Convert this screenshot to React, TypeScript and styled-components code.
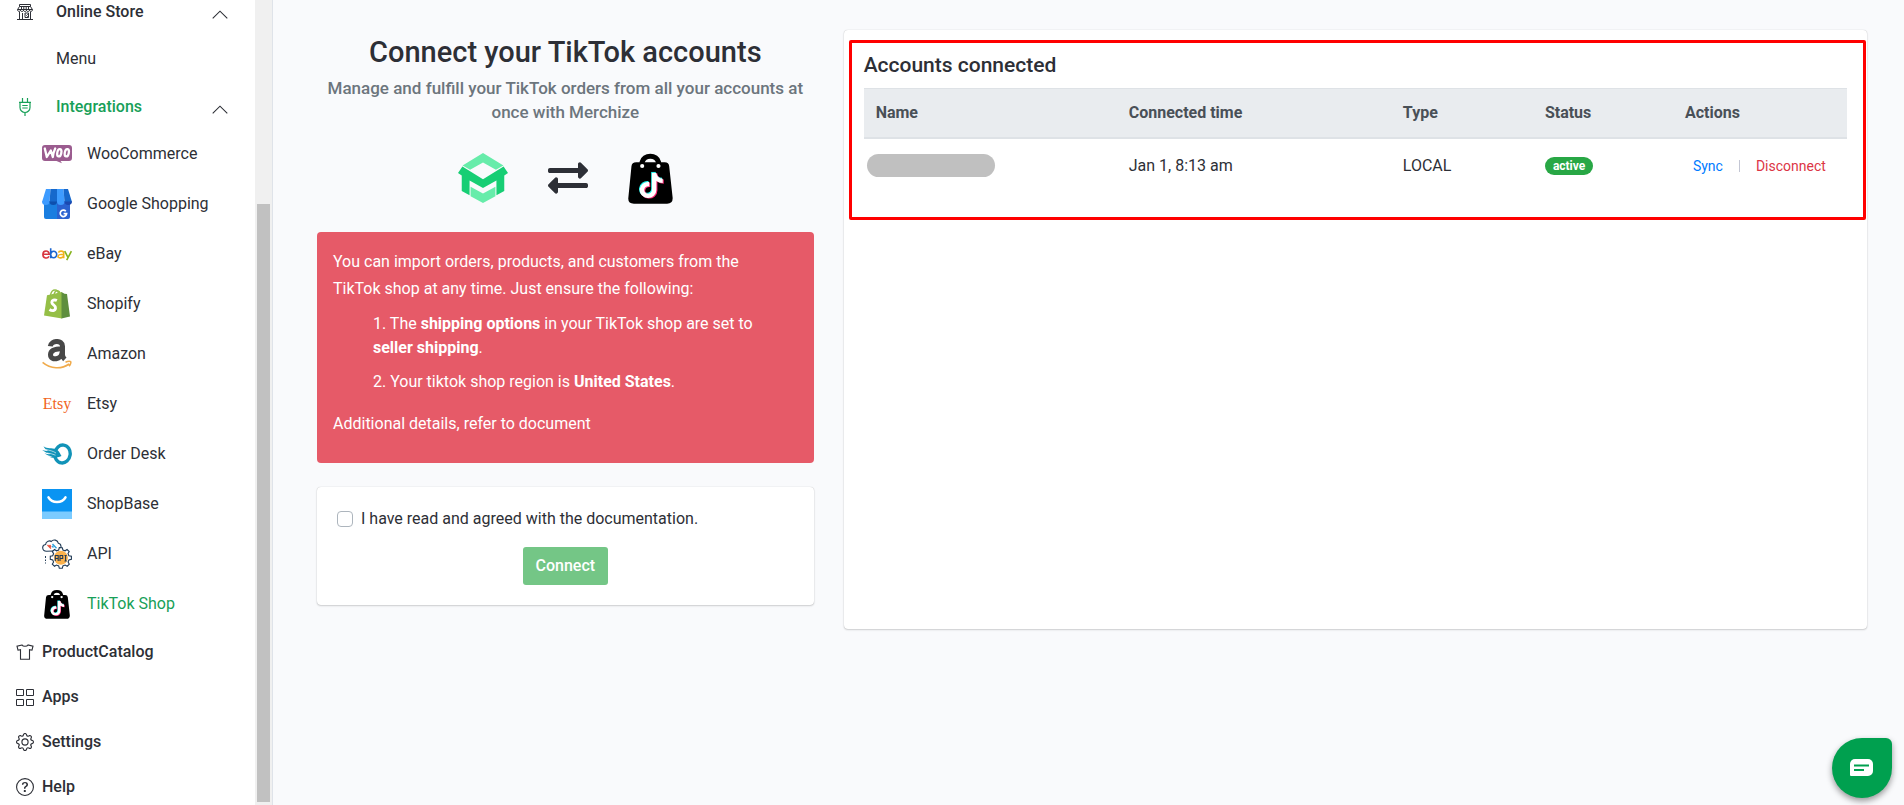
import React from 'react';
import styled, { createGlobalStyle } from 'styled-components';
import { FaExchangeAlt, FaTiktok } from 'react-icons/fa';
import { BsGear, BsQuestionCircle } from 'react-icons/bs';

const GlobalStyle = createGlobalStyle`
  *, *::before, *::after { box-sizing: border-box; }
  body {
    margin: 0;
    background: #f9fafc;
    color: #2d2f36;
    font-family: Roboto, "Liberation Sans", sans-serif;
    font-size: 16px;
    line-height: 24px;
  }
  h1, h2, p, ul, ol { margin: 0; padding: 0; }
  ul, ol { list-style: none; }
  a { color: inherit; text-decoration: none; }
  button { font: inherit; cursor: pointer; }
`;

const Shell = styled.div`
  display: grid;
  grid-template-columns: 273px minmax(0, 1fr);
  min-height: 100vh;
`;

/* ---------- Sidebar ---------- */

const Sidebar = styled.aside`
  position: sticky;
  top: 0;
  height: 100vh;
  display: flex;
  overflow: hidden;
  background: #fff;
  border-right: 1px solid #dfe3e9;
`;

const Nav = styled.nav`
  flex: 1;
  margin-top: -11px;
`;

const ScrollTrack = styled.div`
  width: 17px;
  padding: 204px 2px 3px;
  background: #f0f0f0;
`;

const ScrollThumb = styled.div`
  height: 100%;
  background: #c1c1c1;
`;

const GroupButton = styled.button<{ $active?: boolean }>`
  display: flex;
  align-items: center;
  width: 100%;
  height: 45px;
  padding: 0 27px 0 16px;
  border: 0;
  background: none;
  text-align: left;
  font-weight: 500;
  color: ${(p) => (p.$active ? '#18a058' : '#2d2f36')};
`;

const GroupIcon = styled.span`
  display: flex;
  justify-content: center;
  width: 18px;
  margin-right: 22px;
`;

const GroupLabel = styled.span`
  flex: 1;
`;

const SubLink = styled.a<{ $active?: boolean }>`
  display: flex;
  align-items: center;
  gap: 15px;
  height: 50px;
  padding-left: 42px;
  color: ${(p) => (p.$active ? '#18a058' : '#2d2f36')};
`;

const MenuLink = styled(SubLink)`
  padding-left: 56px;
`;

const SubIcon = styled.span`
  display: flex;
  align-items: center;
  justify-content: center;
  width: 30px;
  height: 30px;
`;

const MainLink = styled.a`
  display: flex;
  align-items: center;
  gap: 8px;
  height: 45px;
  padding-left: 16px;
  font-weight: 500;
`;

/* ---------- Page ---------- */

const Main = styled.main`
  display: grid;
  grid-template-columns: minmax(0, 1fr) minmax(0, 2fr);
  align-items: start;
  padding: 30px 22px 30px 29px;
`;

const Column = styled.section`
  padding: 0 15px;
`;

const Title = styled.h1`
  font-size: 29px;
  line-height: 44px;
  font-weight: 500;
  text-align: center;
`;

const Subtitle = styled.p`
  margin-top: 2px;
  padding: 0 4px;
  font-size: 17px;
  text-align: center;
  font-weight: 500;
  color: #6c757d;
`;

const LinkedApps = styled.div`
  display: flex;
  align-items: center;
  justify-content: center;
  gap: 40px;
  height: 52px;
  margin: 28px 0;
`;

const Notice = styled.div`
  padding: 16px;
  border-radius: 4px;
  background: #e65a68;
  color: #fff;
  min-height: 231px;
`;

const NoticeText = styled.p`
  padding-right: 16px;
  line-height: 27px;
`;

const NoticeList = styled.ol`
  display: grid;
  gap: 10px;
  margin: 10px 0 16px;
  padding: 0 40px;
`;

const Card = styled.div`
  border-radius: 4px;
  background: #fff;
  box-shadow: 0 0 1px rgba(0, 0, 0, 0.25), 0 1px 2px rgba(0, 0, 0, 0.16);
`;

const AgreeCard = styled(Card)`
  display: flex;
  flex-direction: column;
  margin-top: 24px;
  padding: 20px;
`;

const AgreeLabel = styled.label`
  display: flex;
  align-items: center;
  gap: 8px;
`;

const Checkbox = styled.input`
  appearance: none;
  width: 16px;
  height: 16px;
  margin: 0;
  border: 1px solid #adb5bd;
  border-radius: 4px;
  background: #fff;
  &:checked { background: #28a745; }
`;

const ConnectButton = styled.button`
  align-self: center;
  height: 38px;
  margin-top: 16px;
  padding: 0 13px;
  border: 0;
  border-radius: 3px;
  background: #74c686;
  color: #fff;
  font-weight: 500;
`;

const AccountsCard = styled(Card)`
  min-height: 599px;
  padding: 10px 1px 10px 5px;
`;

const Highlight = styled.div`
  min-height: 180px;
  padding: 10px 16px 0 12px;
  border: 3px solid #f00;
  border-radius: 2px;
`;

const CardTitle = styled.h2`
  font-size: 21px;
  line-height: 24px;
  font-weight: 500;
`;

const Table = styled.table`
  width: 100%;
  margin-top: 11px;
  border-collapse: collapse;
  table-layout: fixed;
`;

const HeadCell = styled.th<{ $width: number }>`
  width: ${(p) => p.$width}px;
  padding: 12px;
  border-top: 1px solid #dee2e6;
  border-bottom: 2px solid #dee2e6;
  background: #e9ecef;
  color: #495057;
  text-align: left;
  font-weight: 700;
`;

const Cell = styled.td`
  height: 54px;
  padding: 0 12px;
  white-space: nowrap;
`;

const NameCell = styled(Cell)`
  padding: 0 3px;
`;

const HiddenName = styled.div`
  width: 128px;
  height: 23px;
  border-radius: 12px;
  background: #c0c0c0;
`;

const Badge = styled.span`
  display: inline-block;
  padding: 0 8px;
  border-radius: 9px;
  background: #28a745;
  color: #fff;
  font-size: 12px;
  line-height: 18px;
  font-weight: 700;
  vertical-align: middle;
`;

const Actions = styled.div`
  display: flex;
  align-items: center;
  gap: 16px;
  padding-left: 8px;
`;

const ActionButton = styled.button<{ $danger?: boolean }>`
  padding: 0;
  border: 0;
  background: none;
  font-size: 14px;
  line-height: 24px;
  color: ${(p) => (p.$danger ? '#dc3545' : '#007bff')};
`;

const Divider = styled.span`
  width: 1px;
  height: 12px;
  background: #c3c6d4;
`;

const ChatButton = styled.button`
  position: fixed;
  right: 12px;
  bottom: 7px;
  display: flex;
  align-items: center;
  justify-content: center;
  width: 60px;
  height: 60px;
  padding: 0;
  border: 0;
  border-radius: 30px 6px 30px 30px;
  background: #00a04f;
  box-shadow: 0 3px 6px rgba(0, 0, 0, 0.4);
`;

/* ---------- Icons ---------- */

const ChevronUp = () => (
  <svg width="16" height="15" viewBox="0 0 16 15" fill="none" stroke="#2d2f36" strokeWidth="1.1">
    <path d="M.7 14.400 8 7.200l7.300 7.200" />
  </svg>
);

const StoreIcon = () => (
  <svg width="16" height="16" viewBox="0 0 16 16" fill="none" stroke="#2d2f36">
    <path d="M2.500.5h11v2h-11zM2.500 2.500.600 5.500M13.500 2.500l1.900 3M4.500 2.500v3M6.800 2.500v3M9.200 2.500v3M11.500 2.500v3" />
    <path d="M.5 5.500h15c0 2.500-3 2.500-3 .5 0 2-3 2-3 0 0 2-3 2-3 0 0 2-3 2-3 0 0 2-3 2-3-.5z" />
    <path d="M2.500 8v7M13.500 8v7M5.500 15V9M0 15.500h16M8 9h3.500v4.500H8z" />
    <path d="m8.500 10.500 2.500 2.500M10 10l1.500 1.500" strokeWidth=".7" />
  </svg>
);

const PlugIcon = () => (
  <svg width="14" height="18" viewBox="0 0 14 18" fill="none" stroke="#18a058" strokeWidth="1.200">
    <path d="M4.500 0v3.800M9.500 0v3.800M1 4.300h12M2 4.300v5.200a5 5 0 0 0 10 0V4.300M7 14.500V18M4.300 7.500h5.400M4.300 10h5.400" />
  </svg>
);

const ShirtIcon = () => (
  <svg width="18" height="18" viewBox="0 0 18 18" fill="none" stroke="#2d2f36" strokeWidth="1.100">
    <path d="M6 2 1 3.200l1 4 2.500-.6v9.700h9V6.600l2.500.6 1-4L12 2c-1 1.700-5 1.700-6 0z" />
  </svg>
);

const AppsIcon = () => (
  <svg width="18" height="18" viewBox="0 0 18 18" fill="none" stroke="#2d2f36">
    <path d="M.5 1.500h7v6h-7zM10.500 1.500h7v6h-7zM.5 11.500h7v6h-7zM10.500 11.500h7v6h-7z" />
  </svg>
);

const WooIcon = () => (
  <svg width="30" height="30" viewBox="0 0 30 30">
    <path fill="#9b5c8f" d="M3 6h24a3 3 0 0 1 3 3v10a3 3 0 0 1-3 3h-8.500l1.500 2.300L14.500 22H3a3 3 0 0 1-3-3V9a3 3 0 0 1 3-3z" />
    <g fill="none" stroke="#fff" strokeWidth="2.300" strokeLinecap="round" strokeLinejoin="round">
      <path d="M2.800 9.500 4.800 18l4-6.500 2 6.500q.6-5 2.400-8.500" />
      <ellipse cx="17.300" cy="13.800" rx="2" ry="3.700" transform="rotate(12 17.300 13.800)" />
      <ellipse cx="24.800" cy="13.800" rx="2" ry="3.700" transform="rotate(12 24.800 13.800)" />
    </g>
  </svg>
);

const GoogleShopIcon = () => (
  <svg width="30" height="30" viewBox="0 0 30 30">
    <path fill="#1a7ee0" d="M2 12h13v18H4a2 2 0 0 1-2-2z" />
    <path fill="#2a62d0" d="M15 12h13v16a2 2 0 0 1-2 2H15z" />
    <path fill="#3d9bff" d="M4 0h4.500L7.500 13H0z" />
    <path fill="#1668cc" d="M8.500 0H15v13H7.500z" />
    <path fill="#3d9bff" d="M15 0h6.500l1 13H15z" />
    <path fill="#1668cc" d="M21.500 0H26l4 13h-7.500z" />
    <path fill="#3d9bff" d="M0 12.500h7.500a3.750 3.500 0 0 1-7.500 0z" />
    <path fill="#0d4fae" d="M7.500 12.500H15a3.750 3.500 0 0 1-7.500 0z" />
    <path fill="#3d9bff" d="M15 12.500h7.500a3.750 3.500 0 0 1-7.500 0z" />
    <path fill="#1b49b0" d="M22.500 12.500H30a3.750 3.500 0 0 1-7.500 0z" />
    <path fill="none" stroke="#fff" strokeWidth="1.700" d="M23.800 22.200a3.200 3.200 0 1 0 .8 2.500h-3" />
  </svg>
);

const EbayIcon = () => (
  <svg width="30" height="30" viewBox="0 0 30 30" fill="none" strokeWidth="1.600">
    <path stroke="#d8353f" d="M1 15.300h6.200c0-4.400-6.300-4.300-6.300.2 0 4.200 5 4.400 6 1.700" />
    <path stroke="#1b66d0" d="M8.700 9.300v10M8.700 15.500a3 3.300 0 1 1 6 0 3 3.300 0 1 1-6 0" />
    <path stroke="#f3b11c" d="M16.500 13.700c.4-2.200 5.200-2.200 5.200.5v5M21.700 15.300c-3.500 0-5.700.3-5.700 2.100 0 2.300 5.700 2 5.700-1.200" />
    <path stroke="#86b31d" d="m22.700 12.200 3.400 6.400M29.400 12.200l-4.700 9" />
  </svg>
);

const ShopifyIcon = () => (
  <svg width="30" height="30" viewBox="0 0 30 30">
    <path fill="none" stroke="#95bf47" strokeWidth="1.400" d="M8.500 6c.6-3 2.400-5 4.500-5s3.300 1.700 3.500 4M12 6c.5-3 2-4.500 3.500-4.300S18 3.200 18 5" />
    <path fill="#95bf47" d="M5 6.200 20 3v26.600L2 26.400z" />
    <path fill="#5e8e3e" d="m19.500 3 3 1.700 2.500.3 3 22.400-8.500 2.200z" />
    <path fill="none" stroke="#fff" strokeWidth="2.900" d="M14.900 11.500c-2.500-1.200-5-.4-5.100 1.800 0 2.700 4 2.700 3.700 5.900-.3 2.700-3.400 3.100-6 1.300" />
  </svg>
);

const AmazonIcon = () => (
  <svg width="30" height="30" viewBox="0 0 30 30" fill="none">
    <path stroke="#484848" strokeWidth="5" d="M8.300 7.300c.8-6.300 12.200-6.600 12.200 0v8.500c0 2 .9 3.300 2.300 4.600M20.500 9.800c-6 0-12 .9-12 5.900 0 6.200 11.500 5.400 11.500-2.400" />
    <path stroke="#f0ab4c" strokeWidth="1.600" d="M.6 23.400c8 6.800 19 7 26.500 1.600M23.500 23.200c2-.9 4.600-1 5.200-.5.500.7-.4 3.300-1.600 4.600" />
  </svg>
);

const EtsyLogo = styled.span`
  font: 16px/30px "Liberation Serif", serif;
  color: #f1641e;
`;

const OrderDeskIcon = () => (
  <svg width="30" height="30" viewBox="0 0 30 30" fill="none">
    <ellipse cx="20.500" cy="15" rx="7.700" ry="9" stroke="#1193b8" strokeWidth="3.400" transform="rotate(8 20.500 15)" />
    <path fill="#1193b8" d="M1.500 7.300c4 3 8 1.200 12.500 3.200 3.500 1.500 4 4 5.500 6.500-4 1.500-8 3-13 .5 2 .3 3 .2 4-.2-3-.2-5.500-1-8-3 2.300.8 4.300 1 6 .8C5.500 14.300 2.500 12.700.2 11c2 .7 4 1 6 1C4 11 2.500 9.500 1.500 7.300z" />
    <path stroke="#fff" strokeWidth=".6" d="M4 10.500c4 1 7 1.500 10 3.500M5 14c3 .5 6 1 8.500 2.200" />
  </svg>
);

const ShopBaseIcon = () => (
  <svg width="30" height="30" viewBox="0 0 30 30">
    <path fill="#0a94f2" d="M0 0h30v23H0z" />
    <path fill="#7bcbff" d="M0 22.500h30V30H0z" />
    <path fill="none" stroke="#fff" strokeWidth="2.500" strokeLinecap="round" d="M6.500 8.300c3.500 6.300 13.500 6.300 17 0" />
  </svg>
);

const ApiIcon = () => (
  <svg width="30" height="30" viewBox="0 0 30 30" fill="none">
    <path stroke="#203a55" strokeWidth="1.100" d="M4.500 12.300C-.3 12-.5 6 3.600 5.500 3.800 2 8 1.300 9.300 2.500c2-2.700 6.500-1.500 7 1.700 3.300.5 3.500 5 1.200 7.500z" />
    <path stroke="#e8503c" strokeWidth="1.400" d="m5.500 6 3.500 3.500M7.500 6 9 7.800" />
    <path stroke="#31a2dc" strokeWidth="1.400" d="m10.500 5 4 4.300M10 7l1.500 1.500" />
    <path stroke="#203a55" strokeWidth="1.100" fill="#fff" d="m17.300 8.500 3 .2.600 2.300 2.200.8 2-1.300 2.100 2-1.200 2.100.9 2.200 2.500.5v3l-2.500.6-.8 2.100 1.200 2.200-2.100 2-2.100-1.200-2.200.9-.6 2.400h-3l-.6-2.400-2.200-.9-2 1.200-2.200-2 1.300-2.200-.9-2.100-2.400-.6v-3l2.400-.5.9-2.200-1.300-2.100 2.200-2 2 1.300 2.200-.8z" />
    <circle cx="18.900" cy="18.800" r="7" fill="#fbb24d" />
    <path stroke="#203a55" strokeWidth="1.100" d="M13.300 22v-5.500h2.900V22m-2.900-2.500h2.900M18 22v-5.500h2.700v3H18M22.500 16.500h2.200m-1.100 0V22m-1.100 0h2.200" />
    <path stroke="#203a55" d="M3.500 17v2M3.500 20.500v1.500M3.500 23.500v1" />
  </svg>
);

const TikTokBag = ({ height }: { height: number }) => (
  <svg
    width={Math.round(height * 0.865)}
    height={height}
    viewBox="0 0 130 156"
    preserveAspectRatio="none"
  >
    <path fill="none" stroke="#000" strokeWidth="15" d="M41 42V30a24 22 0 0 1 47 0v12" />
    <path d="M24 31h82q12 0 13 12l10 94q1 18-16 18H17Q-1 155 1 137l9-94q1-12 14-12z" />
    <circle cx="41" cy="42" r="6" fill="#fff" />
    <circle cx="88" cy="42" r="6" fill="#fff" />
    <FaTiktok x="27" y="59" size={76} color="#25f4ee" />
    <FaTiktok x="32" y="64" size={76} color="#fe2c78" />
    <FaTiktok x="29" y="62" size={76} color="#fff" />
  </svg>
);

const MerchizeLogo = () => (
  <svg width="50" height="50" viewBox="0 0 147 147">
    <path fill="#67ecaa" d="m73.500 0 60 37-22 12-38-21-38 21-22-12z" />
    <path fill="#17ce74" d="m13 40 60.500 37L134 40l13 19-11 7v46l-23 12V81l-39.500 22L34 81v43l-23-12V66L0 59z" />
    <path fill="#67ecaa" d="m37 99 36.500 20L110 99v28l-36.500 20L37 127z" />
  </svg>
);

const ChatIcon = () => (
  <svg width="24" height="18" viewBox="0 0 24 18">
    <path fill="#fff" d="M5 0h13a5 5 0 0 1 5 5v7a5 5 0 0 1-5 5H1a1 1 0 0 1-1-1V5a5 5 0 0 1 5-5z" />
    <path stroke="#00a04f" strokeWidth="2" d="M4 6.500h15M4 11h10" />
  </svg>
);

/* ---------- Data ---------- */

const integrations = [
  { label: 'WooCommerce', icon: <WooIcon /> },
  { label: 'Google Shopping', icon: <GoogleShopIcon /> },
  { label: 'eBay', icon: <EbayIcon /> },
  { label: 'Shopify', icon: <ShopifyIcon /> },
  { label: 'Amazon', icon: <AmazonIcon /> },
  { label: 'Etsy', icon: <EtsyLogo>Etsy</EtsyLogo> },
  { label: 'Order Desk', icon: <OrderDeskIcon /> },
  { label: 'ShopBase', icon: <ShopBaseIcon /> },
  { label: 'API', icon: <ApiIcon /> },
  { label: 'TikTok Shop', icon: <TikTokBag height={30} />, active: true },
];

const mainLinks = [
  { label: 'ProductCatalog', icon: <ShirtIcon /> },
  { label: 'Apps', icon: <AppsIcon /> },
  { label: 'Settings', icon: <BsGear size={18} /> },
  { label: 'Help', icon: <BsQuestionCircle size={18} /> },
];

const columns = [
  { label: 'Name', width: 253 },
  { label: 'Connected time', width: 274 },
  { label: 'Type', width: 142 },
  { label: 'Status', width: 140 },
  { label: 'Actions', width: 174 },
];

export default function App() {
  return (
    <Shell>
      <GlobalStyle />
      <Sidebar>
        <Nav>
          <GroupButton type="button">
            <GroupIcon><StoreIcon /></GroupIcon>
            <GroupLabel>Online Store</GroupLabel>
            <ChevronUp />
          </GroupButton>
          <MenuLink href="#menu">Menu</MenuLink>
          <GroupButton type="button" $active>
            <GroupIcon><PlugIcon /></GroupIcon>
            <GroupLabel>Integrations</GroupLabel>
            <ChevronUp />
          </GroupButton>
          <ul>
            {integrations.map((item) => (
              <li key={item.label}>
                <SubLink href="#integration" $active={item.active}>
                  <SubIcon aria-hidden="true">{item.icon}</SubIcon>
                  {item.label}
                </SubLink>
              </li>
            ))}
          </ul>
          <ul>
            {mainLinks.map((item) => (
              <li key={item.label}>
                <MainLink href="#section">
                  {item.icon}
                  {item.label}
                </MainLink>
              </li>
            ))}
          </ul>
        </Nav>
        <ScrollTrack>
          <ScrollThumb />
        </ScrollTrack>
      </Sidebar>

      <Main>
        <Column>
          <Title>Connect your TikTok accounts</Title>
          <Subtitle>
            Manage and fulfill your TikTok orders from all your accounts at once with Merchize
          </Subtitle>
          <LinkedApps>
            <MerchizeLogo />
            <FaExchangeAlt size={40} />
            <TikTokBag height={52} />
          </LinkedApps>
          <Notice>
            <NoticeText>
              You can import orders, products, and customers from the TikTok shop at any time. Just
              ensure the following:
            </NoticeText>
            <NoticeList>
              <li>
                1. The <b>shipping options</b> in your TikTok shop are set to <b>seller shipping</b>.
              </li>
              <li>
                2. Your tiktok shop region is <b>United States</b>.
              </li>
            </NoticeList>
            <NoticeText>
              Additional details, refer to <a href="#document">document</a>
            </NoticeText>
          </Notice>
          <AgreeCard>
            <AgreeLabel>
              <Checkbox type="checkbox" />
              I have read and agreed with the documentation.
            </AgreeLabel>
            <ConnectButton type="button">Connect</ConnectButton>
          </AgreeCard>
        </Column>

        <Column>
          <AccountsCard>
            <Highlight>
              <CardTitle>Accounts connected</CardTitle>
              <Table>
                <thead>
                  <tr>
                    {columns.map((column) => (
                      <HeadCell key={column.label} $width={column.width} scope="col">
                        {column.label}
                      </HeadCell>
                    ))}
                  </tr>
                </thead>
                <tbody>
                  <tr>
                    <NameCell><HiddenName /></NameCell>
                    <Cell>Jan 1, 8:13 am</Cell>
                    <Cell>LOCAL</Cell>
                    <Cell><Badge>active</Badge></Cell>
                    <Cell>
                      <Actions>
                        <ActionButton type="button">Sync</ActionButton>
                        <Divider />
                        <ActionButton type="button" $danger>Disconnect</ActionButton>
                      </Actions>
                    </Cell>
                  </tr>
                </tbody>
              </Table>
            </Highlight>
          </AccountsCard>
        </Column>
      </Main>

      <ChatButton type="button" aria-label="Open chat">
        <ChatIcon />
      </ChatButton>
    </Shell>
  );
}
